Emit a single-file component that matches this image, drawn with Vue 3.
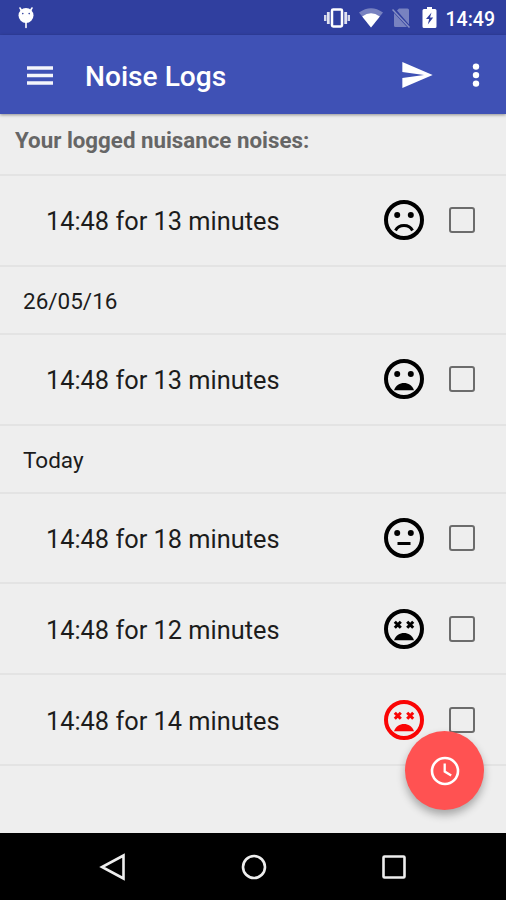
<script setup>
const entries = [
  { type: 'log', text: '14:48 for 13 minutes', face: 'sad' },
  { type: 'date', text: '26/05/16' },
  { type: 'log', text: '14:48 for 13 minutes', face: 'upset' },
  { type: 'date', text: 'Today' },
  { type: 'log', text: '14:48 for 18 minutes', face: 'neutral' },
  { type: 'log', text: '14:48 for 12 minutes', face: 'dead' },
  { type: 'log', text: '14:48 for 14 minutes', face: 'dead', alert: true },
]
</script>

<template>
  <div class="screen">
    <header class="status">
      <svg class="bug" viewBox="0 0 18 24">
        <path d="M4.500 4.500 3 2M13.500 4.500 15 2M9 16v5.500" stroke="#fff" stroke-width="1.600" stroke-linecap="round" />
        <circle cx="9" cy="9.500" r="7.500" fill="#fff" />
        <circle cx="5.800" cy="7.600" r=".8" fill="#303f9f" /><circle cx="12.200" cy="7.600" r=".8" fill="#303f9f" />
      </svg>
      <div class="indicators">
        <svg class="vibrate" viewBox="0 0 28 22">
          <rect x="9" y="2.500" width="10" height="17" rx="1.200" fill="none" stroke="#fff" stroke-width="2.500" />
          <path d="M5.300 5v12M22.700 5v12" stroke="#fff" stroke-width="2.800" opacity=".85" />
          <path d="M2.200 8v6M25.800 8v6" stroke="#fff" stroke-width="2.400" opacity=".8" />
        </svg>
        <svg class="wifi" viewBox="0 0 24 20">
          <path d="M0 4.500Q12-4 24 4.500L12 19.500Z" fill="#fff" opacity=".35" />
          <path d="M3.200 8.500Q12 1.800 20.800 8.500L12 19.500Z" fill="#fff" />
        </svg>
        <svg class="sim" viewBox="0 0 18 20">
          <path d="M5 2.500 7 .5h8.500q1.500 0 1.500 1.500v14.500ZM2 5l13 14H3.500Q2 19 2 17.500Z" fill="#fff" opacity=".35" />
          <path d="m.5 1.500 17 18" stroke="#8790c5" stroke-width="1.500" />
        </svg>
        <svg class="battery" viewBox="0 0 15 21">
          <path d="M5 0h5v2h3q1.500 0 1.500 1.500v16Q14.500 21 13 21H2Q.5 21 .5 19.500v-16Q.5 2 2 2h3Z" fill="#fff" />
          <path d="M9.500 5.500 4 12h3.200L5.800 17.500 11.200 10.500H8Z" fill="#303f9f" />
        </svg>
        <span class="clock">14:49</span>
      </div>
    </header>

    <div class="appbar">
      <svg class="menu" viewBox="0 0 26 19"><path d="M0 2h26M0 9.500h26M0 17h26" stroke="#f4f5fb" stroke-width="3.300" /></svg>
      <h1 class="title">Noise Logs</h1>
      <svg class="send" viewBox="2 3 21 18"><path d="M2.010 21 23 12 2.010 3 2 10l15 2-15 2z" fill="#fff" /></svg>
      <svg class="more" viewBox="0 0 8 26">
        <circle cx="4" cy="4.600" r="3.200" fill="#fff" /><circle cx="4" cy="13.100" r="3.200" fill="#fff" /><circle cx="4" cy="21.600" r="3.200" fill="#fff" />
      </svg>
    </div>

    <main class="content">
      <h2 class="heading">Your logged nuisance noises:</h2>
      <div v-for="(item, i) in entries" :key="i" class="row" :class="[item.type, { alert: item.alert }]">
        <span class="label">{{ item.text }}</span>
        <template v-if="item.type === 'log'">
          <svg class="face" viewBox="0 0 40 40" fill="none" stroke="currentColor">
            <circle cx="20" cy="20" r="18" stroke-width="4" />
            <path v-if="item.face === 'dead'" d="m10.800 12.700 6 6m0-6-6 6M23.200 12.700l6 6m0-6-6 6" stroke-width="3" />
            <g v-else fill="currentColor" stroke="none">
              <circle cx="13.200" cy="15" r="3" /><circle cx="26.800" cy="15" r="3" />
            </g>
            <path v-if="item.face === 'sad'" d="M11.500 30.500c3.400-6.600 13.600-6.600 17 0" stroke-width="3" />
            <path v-else-if="item.face === 'neutral'" d="M13.500 25.500h13" stroke-width="3" />
            <path v-else d="M10 31.300c3.400-9.600 16.600-9.600 20 0Z" fill="currentColor" stroke="none" />
          </svg>
          <span class="checkbox" role="checkbox" aria-checked="false"></span>
        </template>
      </div>
      <button class="fab" aria-label="Log a noise">
        <svg viewBox="0 0 30 30" fill="none" stroke="#fff">
          <circle cx="15" cy="15" r="13" stroke-width="2.600" />
          <path d="M14.700 7.500V15.500l6.500 4" stroke-width="2.300" />
        </svg>
      </button>
    </main>

    <nav class="navbar">
      <svg viewBox="0 0 28 28"><path d="M24.500 2.500v23L3 14Z" /></svg>
      <svg viewBox="0 0 28 28"><circle cx="14" cy="14" r="11" /></svg>
      <svg viewBox="0 0 28 28"><rect x="3.500" y="3.500" width="21" height="21" rx="1" /></svg>
    </nav>
  </div>
</template>

<style>
body { margin: 0; }
</style>

<style scoped>
.screen {
  width: 506px;
  height: 900px;
  display: flex;
  flex-direction: column;
  overflow: hidden;
  background: #eee;
  color: #212121;
  font-family: Roboto, sans-serif;
}
svg { display: block; flex: none; }
.status {
  height: 35px;
  flex: none;
  box-sizing: border-box;
  display: flex;
  align-items: center;
  justify-content: space-between;
  padding: 0 11px 0 17px;
  background: #303f9f;
}
.bug { width: 18px; height: 24px; }
.indicators { display: flex; align-items: center; color: #fff; }
.vibrate { width: 28px; height: 22px; margin-right: 8px; }
.wifi { width: 24px; height: 20px; margin-right: 9px; }
.sim { width: 18px; height: 20px; margin-right: 12px; }
.battery { width: 15px; height: 21px; margin-right: 9px; }
.clock { font-size: 19.500px; font-weight: 500; line-height: 35px; padding-top: 3px; }
.appbar {
  height: 79px;
  flex: none;
  box-sizing: border-box;
  display: flex;
  align-items: center;
  padding: 1px 26px 0 27px;
  background: #3f51b5;
  box-shadow: 0 1px 3px rgba(0, 0, 0, .4);
  z-index: 1;
}
.menu { width: 26px; height: 19px; }
.title { margin: 3px auto 0 32px; font-size: 28.150px; line-height: 36px; font-weight: 500; color: #fff; }
.send { width: 31px; height: 26px; margin-right: 39px; }
.more { width: 8px; height: 26px; }
.content { flex: 1; min-height: 0; position: relative; }
.heading {
  margin: 0;
  height: 62px;
  box-sizing: border-box;
  padding: 12px 15px 0;
  border-bottom: 2px solid #e3e3e3;
  font-size: 22.300px;
  line-height: 28px;
  font-weight: 700;
  color: #666;
}
.row {
  box-sizing: border-box;
  display: flex;
  align-items: center;
  border-bottom: 2px solid #e3e3e3;
}
.log { height: 90.800px; padding: 0 31px 0 46px; color: #000; }
.date { height: 68px; padding: 0 23px; }
.label { margin-right: auto; padding-top: 2px; color: #1c1c1c; }
.log .label { font-size: 25.350px; }
.date .label { font-size: 22.500px; }
.face { width: 40px; height: 40px; margin-right: 25px; }
.alert .face { color: #fa0505; }
.checkbox {
  width: 26px;
  height: 26px;
  box-sizing: border-box;
  border: 2px solid #6c6c6c;
  border-radius: 3px;
}
.fab {
  position: absolute;
  right: 22px;
  bottom: 23px;
  width: 79px;
  height: 79px;
  padding: 0;
  border: 0;
  border-radius: 50%;
  display: grid;
  place-items: center;
  background: #ff5252;
  box-shadow: 0 5px 8px rgba(0, 0, 0, .3);
}
.fab svg { width: 30px; height: 30px; }
.navbar {
  height: 67px;
  flex: none;
  display: flex;
  align-items: center;
  justify-content: center;
  gap: 112.500px;
  padding-left: 1px;
  background: #000;
}
.navbar svg { width: 28px; height: 28px; fill: none; stroke: #eee; stroke-width: 2.600; }
</style>
